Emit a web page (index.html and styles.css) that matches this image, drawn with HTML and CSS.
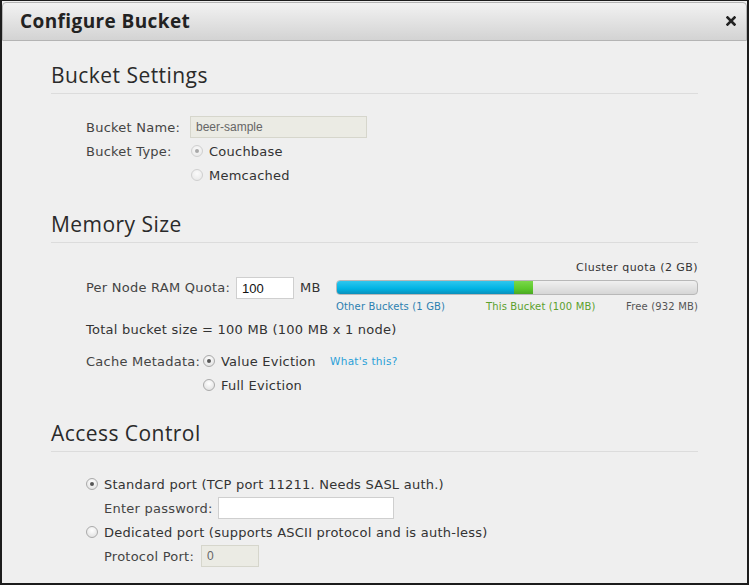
FILE: index.html
```html
<!DOCTYPE html>
<html>
<head>
<meta charset="utf-8">
<link rel="stylesheet" href="styles.css">
</head>
<body>
<div class="dialog">
  <div class="titlebar">
    <span class="title">Configure Bucket</span>
    <svg class="close" width="10" height="10" viewBox="0 0 10 10"><path d="M1.5 1.5 L8.5 8.5 M8.5 1.5 L1.5 8.5" stroke="#222" stroke-width="2.6" stroke-linecap="square"/></svg>
  </div>
  <div class="content">
    <section class="sec sec-bucket">
      <h2>Bucket Settings</h2>
      <div class="rows">
        <div class="row"><span class="lbl w-name">Bucket Name:</span><input class="inp inp-name" value="beer-sample" disabled></div>
        <div class="row"><span class="lbl w-type">Bucket Type:</span><span class="radio checked disabled"></span><span class="opt">Couchbase</span></div>
        <div class="row"><span class="w-type"></span><span class="radio disabled"></span><span class="opt">Memcached</span></div>
      </div>
    </section>

    <section class="sec sec-memory">
      <h2>Memory Size</h2>
      <div class="quota-title">Cluster quota (2 GB)</div>
      <div class="row ram-row">
        <span class="lbl w-ram">Per Node RAM Quota:</span>
        <input class="inp inp-ram" value="100">
        <span class="unit">MB</span>
        <div class="bar-wrap">
          <div class="bar">
            <div class="seg seg-other" style="width:177px"></div>
            <div class="seg seg-this" style="width:19px"></div>
          </div>
          <div class="bar-labels">
            <span class="l-other">Other Buckets (1 GB)</span>
            <span class="l-this">This Bucket (100 MB)</span>
            <span class="l-free">Free (932 MB)</span>
          </div>
        </div>
      </div>
      <div class="row total">Total bucket size = 100 MB (100 MB x 1 node)</div>
      <div class="rows cache">
        <div class="row"><span class="lbl w-cache">Cache Metadata:</span><span class="radio checked"></span><span class="opt w-val">Value Eviction</span><a class="help">What's this?</a></div>
        <div class="row"><span class="w-cache"></span><span class="radio"></span><span class="opt">Full Eviction</span></div>
      </div>
    </section>

    <section class="sec sec-access">
      <h2>Access Control</h2>
      <div class="rows">
        <div class="row"><span class="radio checked"></span><span class="opt">Standard port (TCP port 11211. Needs SASL auth.)</span></div>
        <div class="row sub"><span class="lbl w-pass">Enter password:</span><input class="inp inp-pass" type="text" value=""></div>
        <div class="row"><span class="radio"></span><span class="opt">Dedicated port (supports ASCII protocol and is auth-less)</span></div>
        <div class="row sub"><span class="lbl w-port">Protocol Port:</span><input class="inp inp-port" value="0" disabled></div>
      </div>
    </section>
  </div>
</div>
</body>
</html>
```

FILE: styles.css
```css
* { box-sizing: border-box; }
html, body { margin: 0; padding: 0; }
body {
  width: 749px;
  height: 585px;
  overflow: hidden;
  background: #efefef;
  font-family: "DejaVu Sans", Verdana, sans-serif;
  font-size: 13px;
  letter-spacing: 0.24px;
  color: #333;
}
.dialog {
  width: 749px;
  height: 585px;
  border: 2px solid #1c1c1c;
  border-top-width: 1px;
  background: #efefef;
  display: flex;
  flex-direction: column;
}
.titlebar {
  height: 39px;
  flex: none;
  margin: 1px 0 0 0;
  border: 1px solid #b4b4b4;
  border-radius: 4px 4px 0 0;
  background: linear-gradient(#f2f2f2, #d3d3d3);
  display: flex;
  align-items: center;
  justify-content: space-between;
  padding: 0 10px 0 17px;
}
.title {
  font-family: "Open Sans", sans-serif;
  font-weight: 700;
  font-size: 19px;
  color: #222;
  letter-spacing: 0.4px;
  margin-top: -2px;
}
.close { display: block; margin-top: -1px; }
.content {
  padding: 0 49px 0 49px;
}
.sec h2 {
  font-family: "Open Sans", sans-serif;
  font-weight: 400;
  font-size: 21px;
  letter-spacing: 0.45px;
  color: #2a2a2a;
  margin: 0;
  line-height: 28px;
  padding-bottom: 4px;
  border-bottom: 1px solid #dcdcdc;
}
.sec-bucket h2 { margin-top: 20px; }
.rows { display: flex; flex-direction: column; }
.row {
  display: flex;
  align-items: center;
  height: 24px;
  padding-left: 35px;
  white-space: nowrap;
}
.sec-bucket .rows { margin-top: 21px; }
.lbl { color: #444; }
.w-name, .w-type { width: 104px; flex: none; }
.w-type + .radio { margin-left: 1px; }
.w-ram { width: 150px; flex: none; }
.w-cache { width: 117px; flex: none; }
.w-val { width: 109px; }
.w-pass { width: 114px; flex: none; }
.w-port { width: 97px; flex: none; }
.inp {
  font-family: "Liberation Sans", Arial, sans-serif;
  font-size: 12px;
  letter-spacing: 0;
  height: 22px;
  border: 1px solid #cfcfcf;
  background: #fff;
  color: #222;
  padding: 0 5px;
  outline: none;
}
.inp[disabled] { background: #ebebe4; color: #666; border-color: #d6d6cc; }
.inp-name { width: 177px; }
.inp-ram { width: 58px; font-size: 13px; color: #111; }
.inp-pass { width: 176px; }
.inp-port { width: 58px; }
.radio {
  width: 12px;
  height: 12px;
  flex: none;
  border-radius: 50%;
  border: 1px solid #aaa;
  background: radial-gradient(circle at 50% 35%, #ffffff, #dcdcdc);
  margin-right: 6px;
  position: relative;
}
.radio.checked::after {
  content: "";
  position: absolute;
  left: 3px; top: 3px;
  width: 4px; height: 4px;
  border-radius: 50%;
  background: #555;
}
.radio.disabled { border-color: #d0d0d0; background: radial-gradient(circle at 50% 35%, #fafafa, #e6e6e6); }
.radio.disabled.checked::after { background: #a8a8a8; }
.opt { color: #333; }
.sec-memory h2 { margin-top: 23px; }
.quota-title {
  text-align: right;
  font-size: 11px;
  letter-spacing: 0.45px;
  color: #333;
  margin-top: 18px;
  line-height: 14px;
}
.ram-row { height: auto; margin-top: 1px; align-items: flex-start; }
.ram-row .lbl { line-height: 24px; }
.ram-row .inp { margin-top: 1px; }
.ram-row .unit { width: 42px; flex: none; padding-left: 6px; line-height: 24px; }
.bar-wrap { flex: 1; padding-top: 4px; }
.bar {
  height: 15px;
  border: 1px solid #b8b8b8;
  border-radius: 4px;
  background: linear-gradient(#f0f0f0, #d6d6d6);
  display: flex;
  overflow: hidden;
}
.seg { height: 100%; }
.seg-other { background: linear-gradient(#2fc6ee, #00b3e3 60%, #0a8fbb); }
.seg-this { background: linear-gradient(#7ad84a, #5cc82b 60%, #4aa822); }
.bar-labels {
  display: flex;
  font-size: 10px;
  letter-spacing: 0.15px;
  margin-top: 6px;
  line-height: 12px;
}
.l-other { color: #2c7fb0; width: 150px; flex: none; }
.l-this { color: #5aa02c; }
.l-free { color: #555; margin-left: auto; }
.total { margin-top: 4px; color: #333; }
.cache { margin-top: 8px; }
.help { color: #2aa0d8; font-size: 10.5px; letter-spacing: 0.3px; }
.sec-access h2 { margin-top: 22px; }
.sec-access .rows { margin-top: 20px; }
.row.sub { padding-left: 53px; }
```
